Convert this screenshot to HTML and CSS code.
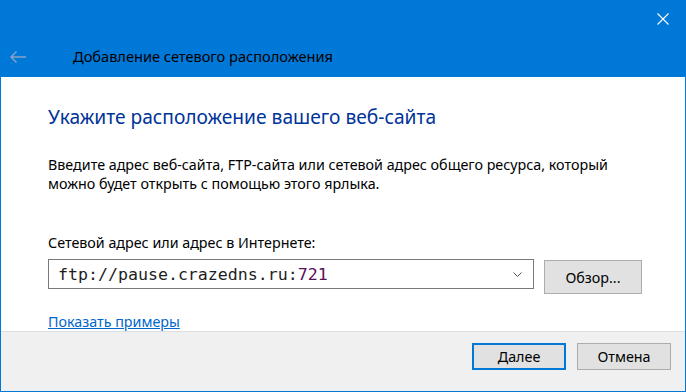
FILE: index.html
```html
<!DOCTYPE html>
<html lang="ru">
<head>
    <meta charset="UTF-8">
    <title>Добавление сетевого расположения</title>
    <link rel="stylesheet" href="styles.css">
</head>
<body>
<div class="dialog">
    <header class="titlebar">
        <div class="caption-row">
            <button class="close-btn" type="button" aria-label="Закрыть">
                <svg width="12" height="12" viewBox="0 0 12 12"><path d="M0.5 0.5L11.5 11.5M11.5 0.5L0.5 11.5" stroke="#fff" stroke-width="1.1" fill="none"/></svg>
            </button>
        </div>
        <div class="nav-row">
            <span class="back-btn">
                <svg width="16" height="12" viewBox="0 0 16 12"><path d="M1 6H16M6.5 0.5L1 6L6.5 11.5" stroke="currentColor" stroke-width="1.4" fill="none"/></svg>
            </span>
            <span class="nav-title">Добавление сетевого расположения</span>
        </div>
    </header>

    <main class="content">
        <h1 class="instruction">Укажите расположение вашего веб-сайта</h1>
        <p class="intro">Введите адрес веб-сайта, FTP-сайта или сетевой адрес общего ресурса, который<br>можно будет открыть с помощью этого ярлыка.</p>

        <label class="field-label" for="address">Сетевой адрес или адрес в Интернете:</label>
        <div class="address-row">
            <div class="combo" id="address">
                <span class="combo-text">ftp://pause.crazedns.ru:<span class="port">721</span></span>
                <svg class="combo-arrow" width="9" height="5" viewBox="0 0 9 5"><path d="M0.5 0.5L4.5 4.5L8.5 0.5" stroke="#555" stroke-width="1" fill="none"/></svg>
            </div>
            <button class="btn btn-browse" type="button">Обзор...</button>
        </div>

        <a class="examples-link" href="#">Показать примеры</a>
    </main>

    <footer class="footer">
        <button class="btn btn-default" type="button">Далее</button>
        <button class="btn" type="button">Отмена</button>
    </footer>
</div>
</body>
</html>
```

FILE: styles.css
```css
body {
    margin: 0;
    font-family: "Noto Sans", "Open Sans", sans-serif;
    font-size: 14.3px;
    color: #000;
    background: #fff;
}
.dialog {
    width: 686px;
    height: 392px;
    box-sizing: border-box;
    border: 1px solid #0078d7;
    border-top: 0;
    display: flex;
    flex-direction: column;
    background: #fff;
}
.titlebar {
    background: #0078d7;
    height: 81px;
    margin: 0 -1px;
}
.caption-row {
    height: 38px;
    display: flex;
    justify-content: flex-end;
}
.close-btn {
    width: 46px;
    height: 38px;
    padding: 0;
    border: none;
    background: transparent;
    display: flex;
    align-items: center;
    justify-content: center;
}
.nav-row {
    height: 38px;
    display: flex;
    align-items: center;
}
.back-btn {
    color: #8ba2c4;
    width: 63px;
    padding-left: 10px;
    display: flex;
    align-items: center;
}
.nav-title {
    font-size: 14.6px;
    color: #000;
    margin-top: -2px;
}
.content {
    flex: 1;
    padding: 27px 20px 0 47px;
}
.instruction {
    margin: 0;
    font-size: 19.2px;
    font-weight: normal;
    line-height: 26px;
    color: #003399;
}
.intro {
    margin: 25px 0 0;
    line-height: 19px;
}
.field-label {
    display: block;
    margin-top: 40px;
    line-height: 19px;
}
.address-row {
    display: flex;
    align-items: flex-start;
    gap: 10px;
    margin-top: 7px;
}
.combo {
    width: 486px;
    height: 30px;
    box-sizing: border-box;
    border: 1px solid #7a7a7a;
    display: flex;
    align-items: center;
    padding: 0 8px 0 9px;
}
.combo-text {
    flex: 1;
    font-family: "DejaVu Sans Mono", "Liberation Mono", monospace;
    font-size: 16.6px;
    color: #1e1e1e;
}
.port {
    color: #56125a;
}
.combo-arrow {
    margin-right: 3px;
}
.btn {
    width: 94px;
    height: 27px;
    box-sizing: border-box;
    border: 1px solid #adadad;
    background: #e1e1e1;
    font-family: "Noto Sans", "Open Sans", sans-serif;
    font-size: 14.3px;
    color: #000;
    padding: 0;
}
.btn-browse {
    width: 98px;
    height: 34px;
    margin-top: 1px;
}
.btn-default {
    border: 2px solid #0078d7;
}
.examples-link {
    display: inline-block;
    margin-top: 18px;
    line-height: 19px;
    color: #0066cc;
}
.footer {
    height: 50px;
    border-top: 1px solid #dfdfdf;
    background: #f0f0f0;
    display: flex;
    justify-content: flex-end;
    align-items: flex-start;
    gap: 11px;
    padding: 11px 14px 0 0;
    box-sizing: content-box;
}
```
